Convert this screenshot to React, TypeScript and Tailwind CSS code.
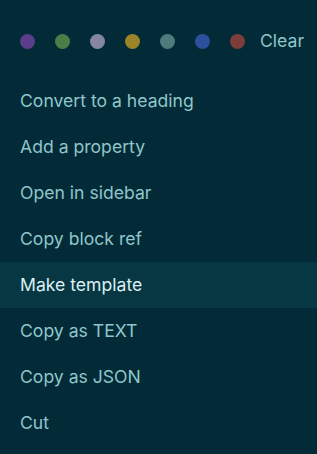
export default function App() {
  const dots = ["#5a3e8c", "#4b7d49", "#84879f", "#9b8427", "#4e7c7d", "#2c4f9e", "#7d3e3b"];
  const items = [
    "Convert to a heading",
    "Add a property",
    "Open in sidebar",
    "Copy block ref",
    "Make template",
    "Copy as TEXT",
    "Copy as JSON",
    "Cut",
  ];
  return (
    <div
      className="w-[317px] h-[454px] bg-[#022b37] overflow-hidden"
      style={{ fontFamily: "Inter, 'Noto Sans', sans-serif" }}
    >
      <div className="pt-[24px] px-[20px] h-[58px] flex items-center">
        <div className="flex items-center gap-[20px]">
          {dots.map((c) => (
            <div key={c} className="w-[15px] h-[15px] rounded-full" style={{ backgroundColor: c }} />
          ))}
        </div>
        <span className="ml-[15px] text-[17.6px] text-[#90c6cb]">Clear</span>
      </div>
      <div className="mt-[20px] flex flex-col">
        {items.map((t) => (
          <div
            key={t}
            className={
              "h-[46px] px-[20px] flex items-center text-[17.6px] " +
              (t === "Make template" ? "bg-[#073742] text-[#dcf0f2]" : "text-[#90c6cb]")
            }
          >
            {t}
          </div>
        ))}
      </div>
    </div>
  );
}
